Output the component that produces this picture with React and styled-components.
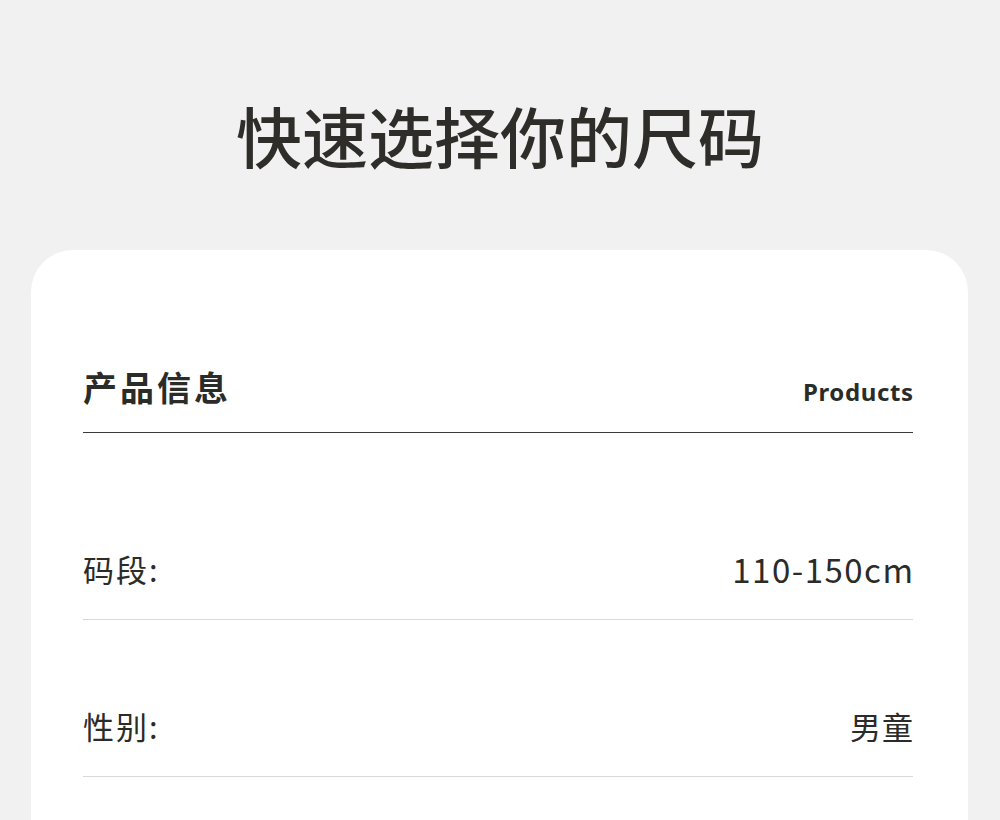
import React from "react";
import styled, { createGlobalStyle } from "styled-components";

const GlobalStyle = createGlobalStyle`
  body {
    margin: 0;
    background: #f1f1f1;
    font-family: "Noto Sans", "Noto Sans CJK SC", sans-serif;
    color: #2b2b28;
  }
`;

const Page = styled.div`
  width: 1000px;
  height: 820px;
  overflow: hidden;
  background: #f1f1f1;
`;

const Title = styled.h1`
  margin: 0;
  padding-top: 101px;
  text-align: center;
  font-family: "Noto Sans CJK SC", sans-serif;
  font-size: 66px;
  line-height: 66px;
  font-weight: 500;
  color: #2e2d2a;
`;

const Card = styled.section`
  margin: 83px 32px 0 31px;
  background: #ffffff;
  border-radius: 42px 42px 0 0;
  padding: 117px 55px 40px 52px;
  min-height: 600px;
`;

const Header = styled.div`
  display: flex;
  justify-content: space-between;
  align-items: baseline;
  padding-bottom: 24px;
  border-bottom: 1.5px solid #3a3a38;
`;

const HeaderTitle = styled.h2`
  margin: 0;
  font-family: "Noto Sans CJK SC", sans-serif;
  font-size: 34px;
  line-height: 40px;
  font-weight: 700;
  letter-spacing: 3px;
  color: #2b2b28;
`;

const HeaderSub = styled.span`
  font-family: "Noto Sans", sans-serif;
  font-size: 24px;
  font-weight: 700;
  letter-spacing: 0.6px;
  margin-right: -0.6px;
  color: #2b2b28;
`;

const Row = styled.div`
  display: flex;
  justify-content: space-between;
  align-items: center;
  padding: ${(p) => (p.$first ? "116px" : "86px")} 0 30px;
  border-bottom: 1px solid #d9d9d9;
`;

const Label = styled.span`
  font-family: "Noto Sans CJK SC", sans-serif;
  font-size: 31px;
  line-height: 40px;
  font-weight: 400;
  letter-spacing: 2px;
  color: #2b2b28;
`;

const Value = styled.span`
  font-family: "Noto Sans CJK SC", sans-serif;
  font-size: ${(p) => (p.$latin ? "33px" : "31px")};
  line-height: 40px;
  font-weight: 400;
  letter-spacing: ${(p) => (p.$latin ? "1.5px" : "1px")};
  margin-right: ${(p) => (p.$latin ? "-1.5px" : "-1px")};
  color: #2b2b28;
`;

const rows = [
  { label: "码段:", value: "110-150cm", latin: true },
  { label: "性别:", value: "男童" },
];

export default function App() {
  return (
    <Page>
      <GlobalStyle />
      <Title>快速选择你的尺码</Title>
      <Card>
        <Header>
          <HeaderTitle>产品信息</HeaderTitle>
          <HeaderSub>Products</HeaderSub>
        </Header>
        {rows.map((r, i) => (
          <Row key={r.label} $first={i === 0}>
            <Label>{r.label}</Label>
            <Value $latin={r.latin}>{r.value}</Value>
          </Row>
        ))}
      </Card>
    </Page>
  );
}
